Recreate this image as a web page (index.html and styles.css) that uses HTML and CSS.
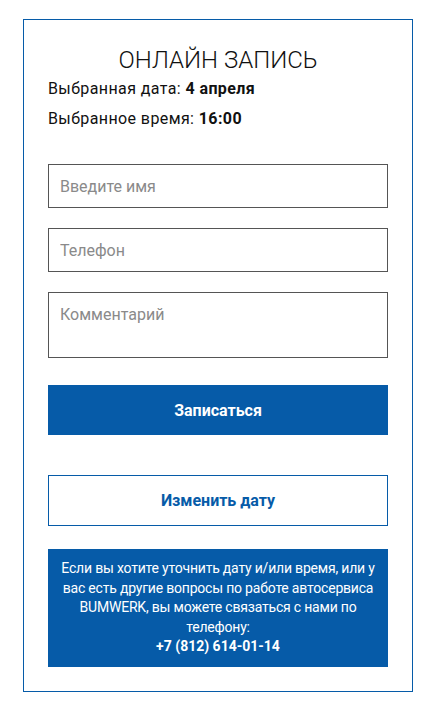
FILE: index.html
```html
<!DOCTYPE html>
<html lang="ru">
<head>
<meta charset="utf-8">
<title>Онлайн запись</title>
<link rel="stylesheet" href="styles.css">
</head>
<body>
<div class="card">
  <h1 class="title">ОНЛАЙН ЗАПИСЬ</h1>
  <p class="info-line">Выбранная дата: <b>4 апреля</b></p>
  <p class="info-line">Выбранное время: <b>16:00</b></p>
  <form class="form">
    <input class="field" type="text" placeholder="Введите имя">
    <input class="field" type="tel" placeholder="Телефон">
    <textarea class="field area" placeholder="Комментарий"></textarea>
    <button class="btn btn-primary" type="button">Записаться</button>
    <button class="btn btn-outline" type="button">Изменить дату</button>
  </form>
  <div class="note">Если вы хотите уточнить дату и/или время, или у вас есть другие вопросы по работе автосервиса BUMWERK, вы можете связаться с нами по телефону:<br><b>+7 (812) 614-01-14</b></div>
</div>
</body>
</html>
```
FILE: styles.css
```css
* { box-sizing: border-box; }
html, body { margin: 0; padding: 0; background: #fff; }
body {
  font-family: Roboto, "Liberation Sans", sans-serif;
  color: #111;
  padding-top: 19px;
}
.card {
  width: 390px;
  margin: 0 auto;
  border: 1px solid #065ba8;
  padding: 26px 24px 24px;
}
.title {
  margin: 0;
  font-weight: 300;
  font-size: 24px;
  line-height: 28px;
  text-align: center;
  color: #111;
}
.info-line {
  margin: 0;
  font-size: 16px;
  line-height: 30px;
  letter-spacing: 0.4px;
}
.info-line b { font-weight: 700; }
.form {
  display: flex;
  flex-direction: column;
  margin-top: 30px;
}
.field {
  display: block;
  width: 100%;
  height: 44px;
  border: 1px solid #555;
  border-radius: 0;
  padding: 0 11px;
  font-family: inherit;
  font-size: 16px;
  color: #111;
  background: #fff;
  margin: 0 0 20px;
  outline: none;
}
.field::placeholder { color: #8a8a8a; }
.area {
  height: 66px;
  padding-top: 12px;
  resize: none;
  margin-bottom: 27px;
}
.btn {
  display: block;
  width: 100%;
  height: 50px;
  font-family: inherit;
  font-size: 16px;
  font-weight: 700;
  border-radius: 0;
  cursor: pointer;
}
.btn-primary {
  background: #065ba8;
  color: #fff;
  border: none;
  margin-bottom: 40px;
}
.btn-outline {
  background: #fff;
  color: #065ba8;
  border: 1px solid #065ba8;
  height: 51px;
}
.note {
  margin-top: 23px;
  background: #065ba8;
  color: #fff;
  font-size: 14px;
  line-height: 19.5px;
  letter-spacing: -0.2px;
  text-align: center;
  padding: 10px 12px;
}
.note b { font-weight: 700; letter-spacing: 0; }
```
